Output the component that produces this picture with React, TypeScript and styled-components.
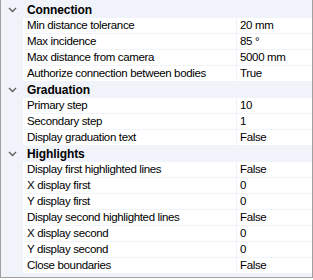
import React from 'react'
import styled, { createGlobalStyle } from 'styled-components'

interface Prop {
    label: string
    value: string
}

interface Category {
    name: string
    props: Prop[]
}

const LINE = '#f0f3f9'

const categories: Category[] = [
    {
        name: 'Connection',
        props: [
            { label: 'Min distance tolerance', value: '20 mm' },
            { label: 'Max incidence', value: '85 °' },
            { label: 'Max distance from camera', value: '5000 mm' },
            { label: 'Authorize connection between bodies', value: 'True' },
        ],
    },
    {
        name: 'Graduation',
        props: [
            { label: 'Primary step', value: '10' },
            { label: 'Secondary step', value: '1' },
            { label: 'Display graduation text', value: 'False' },
        ],
    },
    {
        name: 'Highlights',
        props: [
            { label: 'Display first highlighted lines', value: 'False' },
            { label: 'X display first', value: '0' },
            { label: 'Y display first', value: '0' },
            { label: 'Display second highlighted lines', value: 'False' },
            { label: 'X display second', value: '0' },
            { label: 'Y display second', value: '0' },
            { label: 'Close boundaries', value: 'False' },
        ],
    },
]

const Global = createGlobalStyle`
    body {
        margin: 0;
        background: #ffffff;
        font-family: "Liberation Sans", Arial, sans-serif;
        font-size: 11.5px;
        letter-spacing: -0.35px;
        color: #000000;
    }
`

const Grid = styled.div`
    box-sizing: border-box;
    width: 313px;
    height: 278px;
    padding-top: 2px;
    background: ${LINE};
    border: 1px solid #a0a0a0;
    border-top: none;
    display: flex;
    flex-direction: column;
`

const CategoryRow = styled.div`
    display: grid;
    grid-template-columns: 22px auto;
    height: 16px;
    align-items: center;
`

const Toggle = styled.div`
    display: flex;
    justify-content: center;
    align-items: center;
    padding-left: 1px;
`

const CategoryName = styled.span`
    font-weight: bold;
    font-size: 12px;
    letter-spacing: -0.1px;
    padding-left: 4px;
    line-height: 16px;
`

const PropRow = styled.div`
    display: grid;
    grid-template-columns: 213px 1fr;
    column-gap: 1px;
    margin-left: 22px;
    height: 15px;
    margin-bottom: 1px;
`

const Cell = styled.div<{ $pad: number }>`
    background: #ffffff;
    padding-left: ${p => p.$pad}px;
    line-height: 15px;
    white-space: nowrap;
    overflow: hidden;
`

const Chevron = () => (
    <svg width="9" height="6" viewBox="0 0 9 6">
        <polyline points="1,1 4.5,4.5 8,1" fill="none" stroke="#606060" strokeWidth="1.4" />
    </svg>
)

const App: React.FC = () => {
    return (
        <>
            <Global />
            <Grid>
                {categories.map(cat => (
                    <React.Fragment key={cat.name}>
                        <CategoryRow>
                            <Toggle><Chevron /></Toggle>
                            <CategoryName>{cat.name}</CategoryName>
                        </CategoryRow>
                        {cat.props.map(p =>
                            <PropRow key={p.label}>
                                <Cell $pad={4}>{p.label}</Cell>
                                <Cell $pad={3}>{p.value}</Cell>
                            </PropRow>
                        )}
                    </React.Fragment>
                ))}
            </Grid>
        </>
    )
}

export default App
